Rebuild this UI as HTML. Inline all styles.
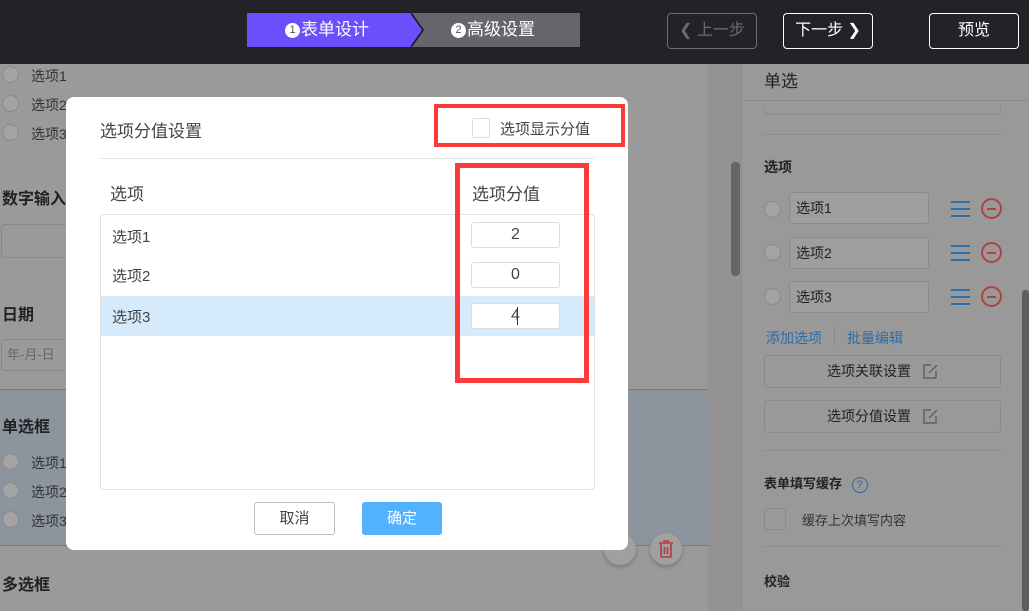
<!DOCTYPE html>
<html><head><meta charset="utf-8"><style>
*{box-sizing:border-box;margin:0;padding:0}
body{width:1029px;height:611px;overflow:hidden;position:relative;background:#9a9a9a;font-family:"Liberation Sans","Noto Sans CJK SC",sans-serif;color:#333}
.a{position:absolute}
.top{left:0;top:0;width:1029px;height:64px;background:#222228}
.circ{display:inline-block;width:15px;height:15px;border-radius:50%;background:#fff;color:#555;font-size:11px;line-height:15px;text-align:center;vertical-align:2px;margin-right:1px}
.btn{border:1px solid #fff;border-radius:4px;color:#fff;font-size:16px;text-align:center;line-height:34px;height:36px}
.rad{width:17px;height:17px;border-radius:50%;border:1px solid #8a8a8a;background:#a3a3a3}
.lt{font-size:14px;color:#333}
.inp{border:1px solid #8a8a8a;border-radius:3px;background:#9e9e9e;font-size:14px;padding-left:6px;line-height:30px;height:32px;color:#222}
.ham{width:19px;height:16px;border-top:2px solid #2b6ea8;border-bottom:2px solid #2b6ea8}
.ham:after{content:"";position:absolute;left:0;top:5px;width:19px;height:2px;background:#2b6ea8}
.minus{width:21px;height:21px;border-radius:50%;border:2px solid #b8403b}
.minus:after{content:"";position:absolute;left:4px;top:8px;width:9px;height:2px;background:#b8403b}
.obtn{border:1px solid #8a8a8a;border-radius:3px;font-size:14px;color:#222;text-align:center;line-height:31px;height:33px}
.red{border:4px solid #fd3a3a}
.num{width:89px;height:26px;border:1px solid #ddd;border-radius:3px;background:#fff;font-size:16px;text-align:center;line-height:24px;color:#444}
.ed{display:inline-block;vertical-align:-3px;margin-left:12px}
</style></head><body>
<div class="a top"></div>
<div class="a" style="left:247px;top:13px;width:166px;height:34px;background:#6b4ffa;color:#fff;font-size:17px;line-height:34px;padding-left:38px"><span class="circ">1</span>表单设计</div>
<div class="a" style="left:413px;top:13px;width:167px;height:34px;background:#66656b;color:#fff;font-size:17px;line-height:34px;padding-left:38px"><span class="circ">2</span>高级设置</div>
<svg class="a" style="left:411px;top:13px" width="14" height="34"><path d="M0 0 L12 17 L0 34" fill="#6b4ffa" stroke="#111" stroke-width="1.5"/></svg>
<div class="a btn" style="left:667px;top:13px;width:90px;border-color:#6b6b70;color:#6b6b70">❮ 上一步</div>
<div class="a btn" style="left:783px;top:13px;width:90px">下一步 ❯</div>
<div class="a btn" style="left:929px;top:13px;width:90px">预览</div>

<div class="a rad" style="left:2px;top:66px"></div><div class="a lt" style="left:31px;top:66px">选项1</div>
<div class="a rad" style="left:2px;top:95px"></div><div class="a lt" style="left:31px;top:95px">选项2</div>
<div class="a rad" style="left:2px;top:124px"></div><div class="a lt" style="left:31px;top:124px">选项3</div>
<div class="a" style="left:2px;top:185px;font-size:16px;font-weight:bold;color:#222">数字输入框</div>
<div class="a" style="left:1px;top:224px;width:80px;height:34px;border:1px solid #888;border-radius:4px"></div>
<div class="a" style="left:2px;top:301px;font-size:16px;font-weight:bold;color:#222">日期</div>
<div class="a" style="left:1px;top:339px;width:80px;height:32px;border:1px solid #888;border-radius:4px;font-size:13px;color:#666;line-height:30px;padding-left:5px">年-月-日</div>
<div class="a" style="left:0;top:389px;width:709px;height:157px;background:#8c959e;border:1px solid #3f88c8;border-left:none"></div>
<div class="a" style="left:2px;top:413px;font-size:16px;font-weight:bold;color:#222">单选框</div>
<div class="a rad" style="left:2px;top:453px"></div><div class="a lt" style="left:31px;top:453px">选项1</div>
<div class="a rad" style="left:2px;top:482px"></div><div class="a lt" style="left:31px;top:482px">选项2</div>
<div class="a rad" style="left:2px;top:511px"></div><div class="a lt" style="left:31px;top:511px">选项3</div>
<div class="a" style="left:604px;top:533px;width:32px;height:32px;border-radius:50%;background:#a0a0a0;box-shadow:0 2px 4px #777"></div>
<div class="a" style="left:650px;top:533px;width:32px;height:32px;border-radius:50%;background:#a0a0a0;box-shadow:0 2px 4px #777"></div>
<svg class="a" style="left:658px;top:540px" width="16" height="18"><path d="M1 3H15M6 3V1H10V3M3 4V17H13V4M6.5 7V14M9.5 7V14" fill="none" stroke="#b83a3a" stroke-width="1.6"/></svg>
<div class="a" style="left:2px;top:571px;font-size:16px;font-weight:bold;color:#222">多选框</div>
<div class="a" style="left:708px;top:64px;width:33px;height:547px;background:#939393"></div>
<div class="a" style="left:731px;top:162px;width:9px;height:114px;background:#666;border-radius:4px"></div>

<div class="a" style="left:741px;top:64px;width:288px;height:547px;background:#999;border-left:1px solid #8f8f8f"></div>
<div class="a" style="left:741px;top:100px;width:288px;height:1px;background:#8c8c8c"></div>
<div class="a" style="left:764px;top:67px;font-size:17px;color:#222">单选</div>
<div class="a" style="left:764px;top:106px;width:237px;height:9px;border:1px solid #8a8a8a;border-top:none;border-radius:0 0 4px 4px"></div>
<div class="a" style="left:764px;top:134px;width:237px;height:1px;background:#8c8c8c"></div>
<div class="a" style="left:764px;top:157px;font-size:14px;font-weight:bold;color:#222">选项</div>
<div class="a rad" style="left:764px;top:201px"></div><div class="a inp" style="left:789px;top:192px;width:140px">选项1</div>
<div class="a ham" style="left:951px;top:201px"></div><div class="a minus" style="left:981px;top:198px"></div>
<div class="a rad" style="left:764px;top:244px"></div><div class="a inp" style="left:789px;top:237px;width:140px">选项2</div>
<div class="a ham" style="left:951px;top:245px"></div><div class="a minus" style="left:981px;top:242px"></div>
<div class="a rad" style="left:764px;top:288px"></div><div class="a inp" style="left:789px;top:281px;width:140px">选项3</div>
<div class="a ham" style="left:951px;top:289px"></div><div class="a minus" style="left:981px;top:286px"></div>
<div class="a" style="left:766px;top:328px;font-size:14px;color:#2e6ca6">添加选项</div>
<div class="a" style="left:834px;top:325px;width:1px;height:22px;background:#888"></div>
<div class="a" style="left:847px;top:328px;font-size:14px;color:#2e6ca6">批量编辑</div>
<div class="a obtn" style="left:764px;top:355px;width:237px">选项关联设置<svg class="ed" width="15" height="15"><path d="M13 7V14H1V1H8M6 9L14 1" fill="none" stroke="#555" stroke-width="1.2"/></svg></div>
<div class="a obtn" style="left:764px;top:400px;width:237px">选项分值设置<svg class="ed" width="15" height="15"><path d="M13 7V14H1V1H8M6 9L14 1" fill="none" stroke="#555" stroke-width="1.2"/></svg></div>
<div class="a" style="left:764px;top:450px;width:237px;height:1px;background:#8c8c8c"></div>
<div class="a" style="left:764px;top:473px;font-size:13px;font-weight:bold;color:#222">表单填写缓存 <span style="display:inline-block;width:16px;height:16px;border:1px solid #2e6ca6;border-radius:50%;color:#2e6ca6;font-size:11px;text-align:center;line-height:14px;margin-left:6px;font-weight:normal">?</span></div>
<div class="a" style="left:764px;top:508px;width:22px;height:22px;border:1px solid #8a8a8a;border-radius:3px"></div>
<div class="a" style="left:802px;top:510px;font-size:13px;color:#333">缓存上次填写内容</div>
<div class="a" style="left:764px;top:546px;width:237px;height:1px;background:#8c8c8c"></div>
<div class="a" style="left:764px;top:571px;font-size:13px;font-weight:bold;color:#222">校验</div>
<div class="a" style="left:1022px;top:290px;width:7px;height:321px;background:#5e5e5e;border-radius:3px"></div>

<div class="a" style="left:66px;top:97px;width:562px;height:453px;background:#fff;border-radius:8px"></div>
<div class="a" style="left:100px;top:117px;font-size:17px;color:#444">选项分值设置</div>
<div class="a" style="left:472px;top:118px;width:18px;height:20px;border:1px solid #ddd;border-radius:2px"></div>
<div class="a" style="left:500px;top:118px;font-size:15px;color:#444">选项显示分值</div>
<div class="a red" style="left:434px;top:104px;width:191px;height:43px"></div>
<div class="a" style="left:100px;top:158px;width:495px;height:1px;background:#e8e8e8"></div>
<div class="a" style="left:110px;top:180px;font-size:17px;color:#444">选项</div>
<div class="a" style="left:472px;top:180px;font-size:17px;color:#444">选项分值</div>
<div class="a" style="left:100px;top:214px;width:495px;height:276px;border:1px solid #e0e0e0;border-radius:4px"></div>
<div class="a" style="left:101px;top:296px;width:493px;height:40px;background:#d5eafb"></div>
<div class="a" style="left:112px;top:226px;font-size:15px;color:#444">选项1</div>
<div class="a" style="left:112px;top:265px;font-size:15px;color:#444">选项2</div>
<div class="a" style="left:112px;top:306px;font-size:15px;color:#444">选项3</div>
<div class="a num" style="left:471px;top:222px">2</div>
<div class="a num" style="left:471px;top:262px">0</div>
<div class="a num" style="left:471px;top:303px">4</div>
<div class="a" style="left:517px;top:307px;width:1px;height:18px;background:#333"></div>
<div class="a" style="left:455px;top:163px;width:134px;height:220px;border:5px solid #fd3a3a"></div>
<div class="a" style="left:254px;top:502px;width:81px;height:33px;border:1px solid #bbb;border-radius:3px;font-size:15px;color:#444;text-align:center;line-height:31px">取消</div>
<div class="a" style="left:362px;top:502px;width:80px;height:33px;background:#52b2ff;border-radius:3px;font-size:15px;color:#fff;text-align:center;line-height:33px">确定</div>
</body></html>
